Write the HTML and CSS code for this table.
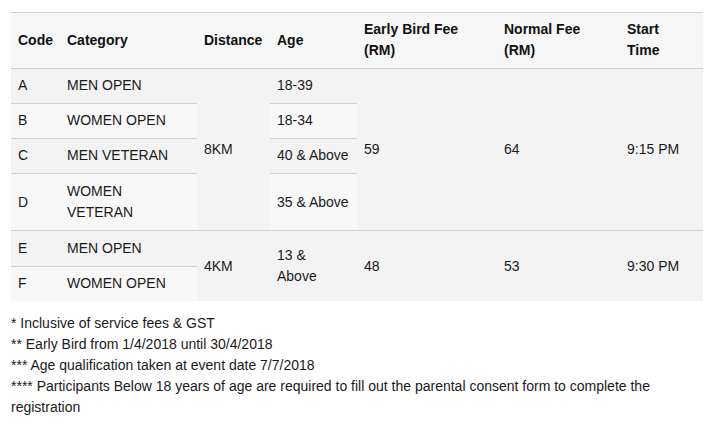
FILE: index.html
```html
<!DOCTYPE html>
<html>
<head>
<meta charset="utf-8">
<link rel="stylesheet" href="styles.css">
</head>
<body>
<div class="page">
  <table class="fees">
    <colgroup>
      <col class="c-code"><col class="c-cat"><col class="c-dist"><col class="c-age"><col class="c-eb"><col class="c-nf"><col class="c-st">
    </colgroup>
    <thead>
      <tr>
        <th>Code</th>
        <th>Category</th>
        <th>Distance</th>
        <th>Age</th>
        <th>Early Bird Fee<br>(RM)</th>
        <th>Normal Fee<br>(RM)</th>
        <th>Start<br>Time</th>
      </tr>
    </thead>
    <tbody>
      <tr>
        <td>A</td><td>MEN OPEN</td><td rowspan="4">8KM</td><td>18-39</td>
        <td rowspan="4">59</td><td rowspan="4">64</td><td rowspan="4">9:15 PM</td>
      </tr>
      <tr><td>B</td><td>WOMEN OPEN</td><td>18-34</td></tr>
      <tr><td>C</td><td>MEN VETERAN</td><td>40 &amp; Above</td></tr>
      <tr class="tall"><td>D</td><td>WOMEN VETERAN</td><td>35 &amp; Above</td></tr>
      <tr class="tall">
        <td>E</td><td>MEN OPEN</td><td rowspan="2">4KM</td><td rowspan="2">13 &amp;<br>Above</td>
        <td rowspan="2">48</td><td rowspan="2">53</td><td rowspan="2">9:30 PM</td>
      </tr>
      <tr><td>F</td><td>WOMEN OPEN</td></tr>
    </tbody>
  </table>
  <div class="notes">
    <p>* Inclusive of service fees &amp; GST</p>
    <p>** Early Bird from 1/4/2018 until 30/4/2018</p>
    <p>*** Age qualification taken at event date 7/7/2018</p>
    <p>**** Participants Below 18 years of age are required to fill out the parental consent form to complete the registration</p>
  </div>
</div>
</body>
</html>
```
FILE: styles.css
```css
html, body {
  margin: 0;
  padding: 0;
  background: #fff;
}
body {
  font-family: "Liberation Sans", Arial, sans-serif;
  font-size: 14px;
  line-height: 21px;
  color: #1a1a1a;
}
.page {
  padding: 12px 14px 0 11px;
  width: 692px;
}
.fees {
  width: 692px;
  table-layout: fixed;
  border-collapse: collapse;
  border-top: 1px solid #d0d0d0;
}
.c-code { width: 49px; }
.c-cat { width: 137px; }
.c-dist { width: 73px; }
.c-age { width: 87px; }
.c-eb { width: 140px; }
.c-nf { width: 123px; }
.c-st { width: 83px; }
.fees th,
.fees td {
  padding: 6px 7px 7px 7px;
  text-align: left;
  vertical-align: middle;
}
.fees th {
  font-weight: bold;
  color: #111;
  background: #f6f6f6;
  border-bottom: 1px solid #d0d0d0;
}
.fees td {
  border-top: 1px solid #d0d0d0;
}
.fees tbody tr.tall td {
  padding-top: 7px;
}
.fees tbody tr:nth-child(odd) td {
  background: #f3f3f3;
}
.fees tbody tr:nth-child(even) td {
  background: #f8f8f8;
}
.fees tbody tr:first-child td {
  border-top: none;
}
.notes {
  padding-top: 12px;
}
.notes p {
  margin: 0;
}
```
